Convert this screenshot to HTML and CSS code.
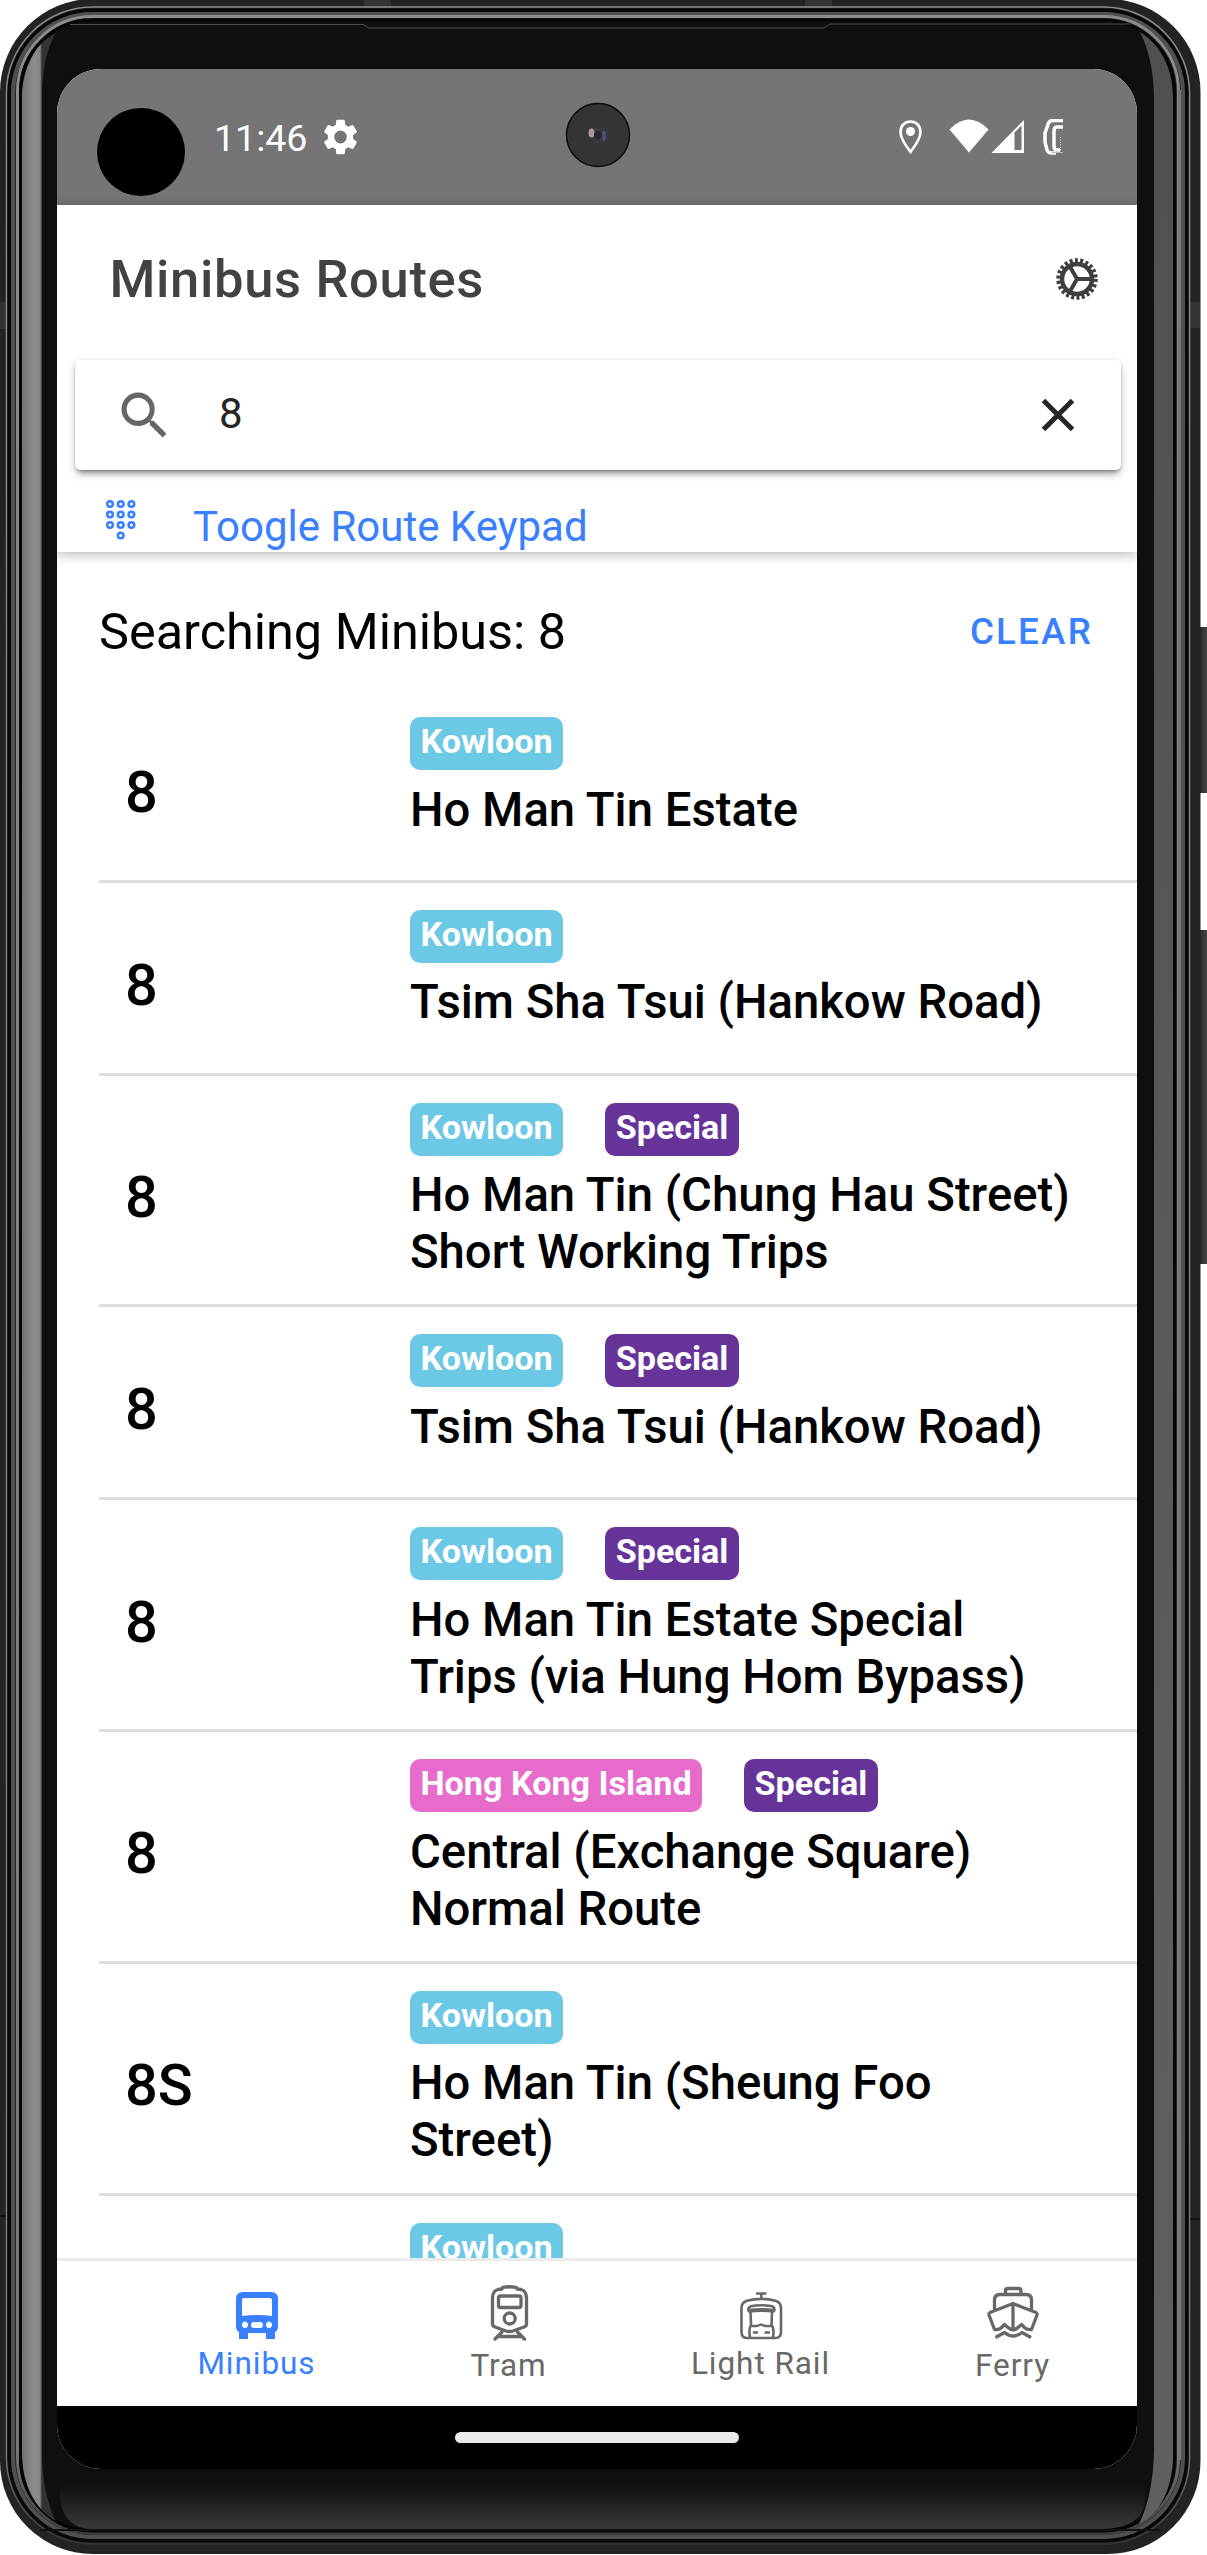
FILE: index.html
```html
<!DOCTYPE html>
<html lang="en">
<head>
<meta charset="utf-8">
<title>Minibus Routes</title>
<link rel="stylesheet" href="styles.css">
</head>
<body>
<div class="phone">
  <svg class="frame" width="1207" height="2555" viewBox="0 0 1207 2555" fill="none">
    <defs>
      <linearGradient id="glassL" x1="22" x2="42" y1="0" y2="0" gradientUnits="userSpaceOnUse"><stop offset="0" stop-color="#747474"/><stop offset=".6" stop-color="#8c8c8c"/><stop offset=".9" stop-color="#858585"/><stop offset="1" stop-color="#333"/></linearGradient>
      <linearGradient id="glassR" x1="0" x2="0" y1="60" y2="2500" gradientUnits="userSpaceOnUse"><stop offset="0" stop-color="#505050"/><stop offset=".55" stop-color="#5a5a5a"/><stop offset="1" stop-color="#606060"/></linearGradient>
      <linearGradient id="chin" x1="0" x2="0" y1="2485" y2="2530" gradientUnits="userSpaceOnUse"><stop offset="0" stop-color="#0f0f0f"/><stop offset="1" stop-color="#3a3a3a"/></linearGradient>
      <linearGradient id="rim" x1="0" x2="0" y1="0" y2="2555" gradientUnits="userSpaceOnUse"><stop offset="0" stop-color="#8c8c8c"/><stop offset=".96" stop-color="#777"/><stop offset="1" stop-color="#2d2d2d"/></linearGradient>
      <linearGradient id="key" x1="1196" x2="1207" y1="0" y2="0" gradientUnits="userSpaceOnUse"><stop offset="0" stop-color="#181818"/><stop offset="1" stop-color="#444"/></linearGradient>
      <radialGradient id="lens"><stop offset="0" stop-color="#6a5a6a"/><stop offset=".25" stop-color="#3a3a40"/><stop offset="1" stop-color="#333"/></radialGradient>
    </defs>
    <rect x="1194" y="627" width="13" height="166" fill="url(#key)"/>
    <rect x="1194" y="930" width="13" height="334" fill="url(#key)"/>
    <rect x="0" y="-1" width="1200.500" height="2555" rx="93" fill="#232323"/>
    <path d="M0 302h6v27H0zM1189 302h11v26h-11zM364 0h27v8h-27zM805 0h27v8h-27z" fill="#333"/>
    <path d="M0 2216h6M1189 2219h11" stroke="#111" stroke-width="2"/>
    <rect x="6.500" y="7" width="1183" height="2537" rx="86" stroke="url(#rim)" stroke-width="1.500"/>
    <rect x="9.500" y="10.500" width="1177" height="2530" rx="83" stroke="#080808" stroke-width="4"/>
    <rect x="13" y="14" width="1170" height="2523" rx="79" stroke="#505050" stroke-width="4"/>
    <rect x="17.500" y="16.500" width="1161" height="2517" rx="75" stroke="url(#rim)" stroke-width="3"/>
    <rect x="20.500" y="20" width="1154" height="2511" rx="72" fill="#0f0f0f" stroke="#050505" stroke-width="3"/>
    <path d="M70 24.500H363l6 3.500H824l6-4H1130" stroke="#4c4c4c"/>
    <path d="M60 2485H1145V2500Q1143 2529 1100 2529H90Q65 2528 60 2500Z" fill="url(#chin)"/>
    <path d="M56 33C47 48 42 68 42 100V2455C42 2480 48 2506 56 2521C36 2510 22 2486 22 2452V98C22 68 36 42 56 33Z" fill="url(#glassL)"/>
    <path d="M1140 32C1149 50 1154 72 1154 100V2452C1153 2485 1147 2508 1139 2524C1160 2514 1173 2488 1173 2455V98C1173 68 1160 44 1140 32Z" fill="url(#glassR)"/>
    <path d="M1179.500 90V2460" stroke="#777" stroke-width="3"/>
    <path d="M40 2530H1160" stroke="#111" stroke-width="2"/>
  </svg>

  <div class="screen">
    <div class="status">
      <span class="punch"></span>
      <span class="clock">11:46</span>
      <svg class="cog" width="35" height="36" viewBox="2 2 20 20" preserveAspectRatio="none"><path fill="#fff" d="M19.140 12.940c.04-.3.060-.61.060-.94 0-.32-.020-.64-.070-.94l2.030-1.580c.18-.14.23-.41.120-.61l-1.920-3.320c-.12-.22-.37-.29-.59-.22l-2.390.96c-.5-.38-1.030-.7-1.620-.94L14.400 2.810c-.04-.24-.24-.41-.48-.41h-3.840c-.24 0-.43.17-.47.41L9.250 5.350c-.59.24-1.130.57-1.620.94L5.240 5.330c-.22-.08-.47 0-.59.22L2.740 8.870c-.12.21-.08.47.120.61l2.030 1.580c-.05.3-.09.63-.09.94s.020.64.070.94l-2.030 1.580c-.18.14-.23.41-.12.61l1.920 3.320c.12.22.37.29.59.22l2.390-.96c.5.38 1.030.7 1.620.94l.36 2.540c.05.24.24.41.48.41h3.840c.24 0 .44-.17.47-.41l.36-2.540c.59-.24 1.130-.56 1.620-.94l2.390.96c.22.08.47 0 .59-.22l1.920-3.320c.12-.22.070-.47-.12-.61zM12 15.600a3.600 3.600 0 1 1 0-7.200 3.600 3.600 0 0 1 0 7.200z"/></svg>
      <svg class="camera" width="66" height="66" viewBox="0 0 66 66"><circle cx="33" cy="33" r="31.500" fill="#343434" stroke="#0b0b0b" stroke-width="1.500"/><circle cx="33" cy="33" r="13" fill="url(#lens)"/><ellipse cx="26.500" cy="31" rx="3" ry="4.500" fill="#a8989d"/><ellipse cx="39" cy="34" rx="2" ry="5" fill="#4a5278"/><circle cx="33" cy="33" r="4" fill="#2b2530"/></svg>
      <svg class="signals" width="170" height="36" viewBox="0 0 170 36">
        <path d="M14.500 2.500C8.500 2.500 4.500 7 4.500 13c0 7 10 20 10 20s10-13 10-20c0-6-4-10.500-10-10.500z" fill="none" stroke="#fff" stroke-width="2.600"/><circle cx="14.500" cy="12.500" r="4.500" fill="#fff"/>
        <path d="M53.500 10.500Q73-9.500 92.500 10.500L73 33.500z" fill="#fff"/>
        <path d="M95.500 34L128 1V34z" fill="#fff"/><path d="M118.500 13.500L125.500 6.500V31H118.500z" fill="#757575"/>
        <path d="M167 1.500H157C153 1.500 152 4 151.500 7L149 14V23L151 31Q152 34 156 34H160" fill="none" stroke="#fff" stroke-width="3.500"/>
        <path d="M167 8H161Q158 8 158 12V27Q158 31 161 31H164" fill="none" stroke="#fff" stroke-width="3.500"/>
        <path d="M164.500 18V32" stroke="#fff" stroke-dasharray="1 1.500"/><path d="M156 33.500H167" stroke="#bbb"/>
      </svg>
    </div>

    <header class="header">
      <div class="toolbar">
        <h1>Minibus Routes</h1>
        <svg width="44" height="44" viewBox="-22 -22 44 44" fill="none" stroke="#3f3f3f"><circle r="15" stroke-width="4.500"/><circle r="18.500" stroke-width="4.500" stroke-dasharray="3 2.284"/><path d="M0 0H15M0 0L-8 -14M0 0L-8 14" stroke-width="4"/></svg>
      </div>
      <div class="search">
        <svg width="60" height="60" viewBox="0 0 512 512" fill="#666"><path d="M337.509 305.372h-17.501l-6.571-5.486c20.791-25.181 33.922-57.066 33.922-93.257C347.358 127.632 283.896 64 205.135 64 127.452 64 64 127.632 64 206.629s63.452 142.628 142.225 142.628c35.011 0 67.831-13.167 92.991-34.008l6.561 5.487v17.551L415.180 448 448 415.086 337.509 305.372zm-131.284 0c-54.702 0-98.463-43.887-98.463-98.743 0-54.858 43.761-98.742 98.463-98.742 54.700 0 98.462 43.884 98.462 98.742 0 54.856-43.762 98.743-98.462 98.743z"/></svg>
        <span class="query">8</span>
        <svg class="cross" width="34" height="34" viewBox="0 0 34 34"><path d="M2.500 2.500L31.500 31.500M31.500 2.500L2.500 31.500" stroke="#262626" stroke-width="5"/></svg>
      </div>
      <div class="keypad">
        <svg width="32" height="42" viewBox="0 0 32 42" fill="none" stroke="#3880ff" stroke-width="2.600"><circle cx="5" cy="5" r="2.800"/><circle cx="15.700" cy="5" r="2.800"/><circle cx="26.400" cy="5" r="2.800"/><circle cx="5" cy="15.500" r="2.800"/><circle cx="15.700" cy="15.500" r="2.800"/><circle cx="26.400" cy="15.500" r="2.800"/><circle cx="5" cy="26" r="2.800"/><circle cx="15.700" cy="26" r="2.800"/><circle cx="26.400" cy="26" r="2.800"/><circle cx="15.700" cy="36.500" r="2.800"/></svg>
        <span>Toogle Route Keypad</span>
      </div>
    </header>

    <main class="content">
      <div class="list-head"><span>Searching Minibus: 8</span><button>CLEAR</button></div>
      <div class="route"><b>8</b><div><p><i class="kln">Kowloon</i></p>Ho Man Tin Estate</div></div>
      <div class="route"><b>8</b><div><p><i class="kln">Kowloon</i></p>Tsim Sha Tsui (Hankow Road)</div></div>
      <div class="route tall"><b>8</b><div><p><i class="kln">Kowloon</i><i class="special">Special</i></p>Ho Man Tin (Chung Hau Street)<br>Short Working Trips</div></div>
      <div class="route"><b>8</b><div><p><i class="kln">Kowloon</i><i class="special">Special</i></p>Tsim Sha Tsui (Hankow Road)</div></div>
      <div class="route tall"><b>8</b><div><p><i class="kln">Kowloon</i><i class="special">Special</i></p>Ho Man Tin Estate Special<br>Trips (via Hung Hom Bypass)</div></div>
      <div class="route tall"><b>8</b><div><p><i class="hki">Hong Kong Island</i><i class="special">Special</i></p>Central (Exchange Square)<br>Normal Route</div></div>
      <div class="route tall"><b>8S</b><div><p><i class="kln">Kowloon</i></p>Ho Man Tin (Sheung Foo<br>Street)</div></div>
      <div class="route"><b></b><div><p><i class="kln">Kowloon</i></p></div></div>
    </main>

    <nav class="tabs">
      <a class="tab active">
        <svg width="64" height="60" viewBox="0 0 64 60"><path fill="#3880ff" fill-rule="evenodd" d="M18 10H46Q53 10 53 17V44Q53 49 50 50V57H41V51H23V57H14V50Q11 49 11 44V17Q11 10 18 10zM19 16Q17 16 17 18V34Q32 32 47 34V18Q47 16 45 16zM20 39.500a3 3.300 0 1 0 .01 0zM29 40Q26 40 26 43T29 46H35Q38 46 38 43T35 40zM44 39.500a3 3.300 0 1 0 .01 0z"/></svg>
        <span>Minibus</span>
      </a>
      <a class="tab low">
        <svg width="64" height="60" viewBox="0 0 64 60" fill="none" stroke="#686868" stroke-width="3.300" stroke-linejoin="round" stroke-linecap="round"><path d="M25.500 5.500Q32.500 4 39.500 5.500L40 7L44 7.500Q49.500 9 49.500 16V42Q49.500 44 47 45L36 49Q32.500 50 29 49L18 45Q15.500 44 15.500 42V16Q15.500 9 21 7.500L25 7z"/><rect x="21.500" y="14" width="22.500" height="11.500" rx="2"/><circle cx="32.700" cy="36.500" r="5.500"/><path d="M25 50L18 57M40.500 50L47.500 57M21 54.500H45"/></svg>
        <span>Tram</span>
      </a>
      <a class="tab">
        <svg width="64" height="60" viewBox="0 0 64 60" fill="none" stroke="#686868" stroke-width="2.600"><path d="M27 11.500H37.500M32.300 11.500V17M18 56Q12.500 56 12.500 50V26Q12.500 20.500 18 18.800Q32 15 46.500 18.800Q52 20.500 52 26V50Q52 56 46.500 56z"/><path d="M21 55.500Q19.500 46 22 43L21.500 30Q18.500 29 19.500 26.500Q20 24.500 23 24Q32 22.500 42 24Q45 24.500 45.300 26.500Q46 29 43 30L42.500 43Q45.500 46 44 55.500"/><path d="M20 28.800Q32 27 45 28.800" stroke-width="4"/><path d="M21 44H28L32 42.500L36 44H43.500M24 50.500H29M35.500 50.500H41" stroke-width="2.400"/></svg>
        <span>Light Rail</span>
      </a>
      <a class="tab low">
        <svg width="64" height="60" viewBox="0 0 64 60" fill="none" stroke="#686868" stroke-width="3.300" stroke-linejoin="round"><path d="M24.500 12V9Q24.500 6.500 27 6.500H37.500Q40 6.500 40 9V12M13.500 29V18Q13.500 12.500 19 12.500H45Q50.500 12.500 50.500 18V29M32 22.500V47M32 21.500L9 30.500Q7.500 31.500 8 33L13.500 47.500Q18 48 20 46L23.500 42.500L27 45.500Q32 50 37 45.500L40.500 42.500L44 46Q46 48 50.500 47.500L56 33Q56.500 31.500 55 30.500z"/><path d="M14.500 55.500L23.500 50.500Q32 57.500 41 50.500L50 55.500"/></svg>
        <span>Ferry</span>
      </a>
    </nav>
    <div class="home"><span></span></div>
  </div>
</div>
</body>
</html>
```
FILE: styles.css
```css
* { box-sizing: border-box; }
body { margin: 0; background: #fff; font-family: Roboto, sans-serif; overflow: hidden; }
h1, p { margin: 0; }
svg { display: block; flex: none; }

.phone { position: relative; width: 1207px; height: 2555px; padding: 69px 70px 86px 57px; overflow: hidden; }
.frame { position: absolute; left: 0; top: 0; }
.screen { position: relative; display: flex; flex-direction: column; width: 1080px; height: 2400px; border-radius: 44px; overflow: hidden; background: #fff; }

.status { position: relative; flex: none; height: 136px; background: #757575; display: flex; align-items: flex-start; padding-left: 40px; }
.punch { width: 88px; height: 88px; margin-top: 39px; border-radius: 50%; background: #000; }
.clock { margin: 47px 0 0 29px; width: 95px; font-size: 37.5px; line-height: 44px; color: #fff; }
.cog { margin: 50px 0 0 14px; }
.camera { position: absolute; left: 508px; top: 33px; }
.signals { margin: 50px 71px 0 auto; }

.header { position: relative; flex: none; height: 347px; background: #fff; box-shadow: 0 2px 12px rgba(0, 0, 0, .3); }
.toolbar { display: flex; align-items: center; justify-content: space-between; height: 147px; padding: 0 38px 0 52.5px; }
h1 { font-size: 52.5px; font-weight: 500; letter-spacing: .0125em; color: #424242; }
.search { display: flex; align-items: center; height: 110px; margin: 8px 16px 0 18px; padding: 0 46px 0 39px; border-radius: 5px; background: #fff; box-shadow: 0 8px 5px -5px rgba(0, 0, 0, .2), 0 5px 5px rgba(0, 0, 0, .14), 0 3px 13px rgba(0, 0, 0, .12), 0 1px 2px rgba(0, 0, 0, .25); }
.query { flex: 1; margin-left: 45px; padding-bottom: 3px; font-size: 42px; color: #262626; }
.keypad { display: flex; align-items: flex-start; margin-top: 29px; padding-left: 48px; gap: 56px; font-size: 42px; line-height: 56px; color: #3880ff; }

.content { flex: 1; min-height: 0; overflow: hidden; padding-left: 42px; }
.list-head { display: flex; align-items: center; justify-content: space-between; height: 138px; padding: 20px 44px 0 0; font-size: 50.4px; }
button { border: 0; padding: 0; background: none; font: 500 36.75px Roboto, sans-serif; letter-spacing: .06em; color: #3880ff; }
.route { display: flex; height: 192.75px; border-bottom: 3px solid #dedede; font-size: 47.25px; font-weight: 500; line-height: 57px; color: #000; }
.route.tall { height: 231.9px; }
.route b { width: 311px; padding: 15px 0 0 26px; align-self: center; font-size: 57.75px; font-weight: 500; }
.route p { display: flex; gap: 42px; height: 53px; margin: 27px 0 11.5px; }
.route i { height: 53px; padding: 0 10.5px; border-radius: 10px; font-size: 34.125px; line-height: 48px; font-weight: 700; font-style: normal; color: #fff; white-space: nowrap; }
.kln { background: #6cc9e6; }
.hki { background: #e76bcb; }
.special { background: #639; }

.tabs { flex: none; display: grid; grid-template-columns: repeat(4, 252px); height: 148px; padding-left: 73.5px; border-top: 3px solid #ebebeb; background: #fff; overflow: hidden; }
.tab { display: flex; flex-direction: column; align-items: center; padding-top: 21px; font-size: 31.5px; line-height: 38px; letter-spacing: .03em; color: #686868; }
.tab span { padding-top: 3px; }
.tab.low span { padding-top: 5px; }
.active { color: #3880ff; }
.home { flex: none; display: flex; justify-content: center; height: 63px; padding-top: 26px; background: #000; }
.home span { width: 284px; height: 11px; border-radius: 6px; background: #eaeaea; }
```
